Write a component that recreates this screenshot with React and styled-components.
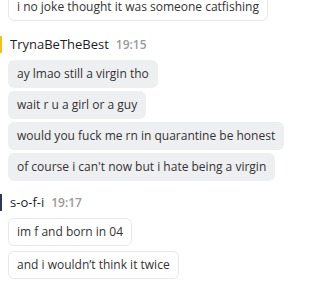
import React from 'react';
import styled, { createGlobalStyle } from 'styled-components';

const GlobalStyle = createGlobalStyle`
  * { box-sizing: border-box; }
  html, body { margin:0; padding:0; background:#fff; overflow:hidden; }
  body { font-family:'Open Sans','Noto Sans',sans-serif; color:#333; -webkit-font-smoothing:antialiased; }
`;

const Feed = styled.div`display:flex;flex-direction:column;margin-top:-7px;`;
const Group = styled.section`display:flex;flex-direction:column;margin-bottom:${p=>p.gap||0}px;`;
const Author = styled.header`display:flex;align-items:baseline;gap:7px;border-left:2px solid ${p=>p.color};padding-left:8px;height:17px;line-height:17px;margin-bottom:7px;`;
const Name = styled.span`font-size:13px;font-weight:500;color:#1e1e1e;`;
const Time = styled.span`font-size:12px;font-weight:600;color:#9a9a9a;`;
const Bubbles = styled.div`display:flex;flex-direction:column;align-items:flex-start;gap:${p=>p.$outline?5:3}px;padding-left:8px;`;
const Bubble = styled.div`font-size:12px;line-height:16px;border-radius:6px;white-space:nowrap;
  background:${p=>p.$outline?'#fff':'#eeeff1'};
  border:1px solid ${p=>p.$outline?'#e8e8ea':'transparent'};
  padding:5px 8px;`;

const groups = [
  { outline:true, messages:['i no joke thought it was someone catfishing'], gap:15 },
  { author:'TrynaBeTheBest', time:'19:15', color:'#f5c412', gap:13,
    messages:['ay lmao still a virgin tho','wait r u a girl or a guy','would you fuck me rn in quarantine be honest','of course i can\'t now but i hate being a virgin'] },
  { author:'s-o-f-i', time:'19:17', color:'#2a3a55', outline:true,
    messages:['im f and born in 04','and i wouldn\u2019t think it twice'] },
];

export default function App() {
  return (
    <>
      <GlobalStyle />
      <Feed>
        {groups.map((g,i)=>(
          <Group key={i} gap={g.gap}>
            {g.author && (
              <Author color={g.color}>
                <Name>{g.author}</Name>
                <Time>{g.time}</Time>
              </Author>
            )}
            <Bubbles $outline={g.outline}>
              {g.messages.map((m,j)=><Bubble key={j} $outline={g.outline}>{m}</Bubble>)}
            </Bubbles>
          </Group>
        ))}
      </Feed>
    </>
  );
}
